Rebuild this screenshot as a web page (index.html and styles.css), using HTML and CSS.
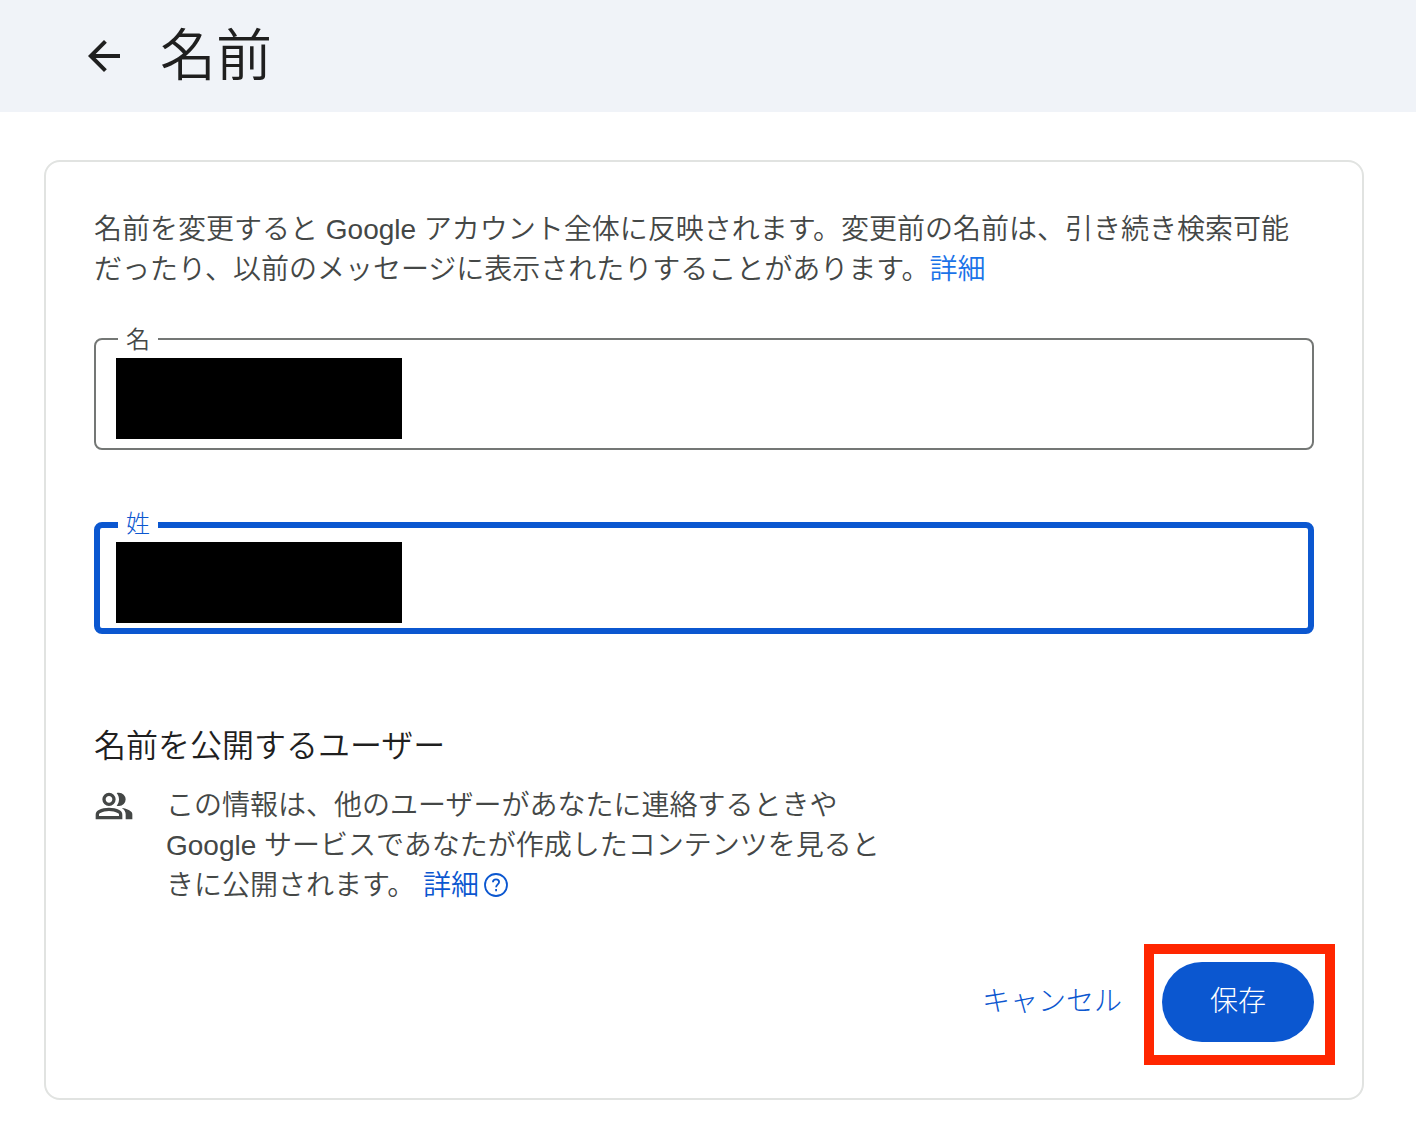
FILE: index.html
```html
<!DOCTYPE html>
<html lang="ja">
<head>
<meta charset="utf-8">
<meta name="viewport" content="width=device-width, initial-scale=1">
<title>名前</title>
<link rel="stylesheet" href="styles.css">
</head>
<body>
<header class="topbar">
  <button class="back" type="button" aria-label="戻る">
    <svg viewBox="0 0 24 24" aria-hidden="true"><path d="M20 11H7.83l5.59-5.59L12 4l-8 8 8 8 1.41-1.41L7.83 13H20v-2z"/></svg>
  </button>
  <h1 class="title">名前</h1>
</header>
<main class="page">
  <form class="card">
    <p class="text">名前を変更すると Google アカウント全体に反映されます。変更前の名前は、引き続き検索可能だったり、以前のメッセージに表示されたりすることがあります。<a class="link link-light" href="#">詳細</a></p>
    <div class="fields">
      <div class="field">
        <label class="label" for="given">名</label>
        <input class="input" id="given" type="text">
        <span class="mask"></span>
      </div>
      <div class="field field-active">
        <label class="label" for="family">姓</label>
        <input class="input" id="family" type="text">
        <span class="mask"></span>
      </div>
    </div>
    <section class="visibility">
      <h2 class="heading">名前を公開するユーザー</h2>
      <div class="info">
        <svg class="people" viewBox="0 0 24 24" aria-hidden="true"><path d="M1 20v-2.8q0-.85.438-1.563T2.6 14.55q1.55-.775 3.15-1.163T9 13t3.25.388 3.15 1.162q.725.375 1.163 1.088T17 17.2V20H1Zm18 0v-3q0-1.1-.613-2.113T16.65 13.15q1.275.15 2.4.513t2.1.887q.9.5 1.375 1.112T23 17v3h-4ZM9 12q-1.65 0-2.825-1.175T5 8t1.175-2.825T9 4t2.825 1.175T13 8t-1.175 2.825T9 12Zm10-4q0 1.65-1.175 2.825T15 12q-.275 0-.7-.063T13.6 11.8q.675-.8 1.037-1.775T15 8t-.363-2.025T13.6 4.2q.35-.125.7-.163T15 4q1.65 0 2.825 1.175T19 8ZM3 18h12v-.8q0-.275-.138-.5t-.362-.35q-1.35-.675-2.725-1.012T9 15t-2.775.338T3.5 16.35q-.225.125-.363.35T3 17.2v.8Zm6-8q.825 0 1.413-.588T11 8t-.588-1.413T9 6t-1.413.588T7 8t.588 1.413T9 10Z"/></svg>
        <p class="text info-text">この情報は、他のユーザーがあなたに連絡するときや Google サービスであなたが作成したコンテンツを見るときに公開されます。 <a class="link" href="#">詳細<svg class="help" viewBox="0 0 28 28" aria-hidden="true"><circle cx="14" cy="14" r="11"/><path d="M10.9 11.2c.1-1.8 1.4-2.9 3.1-2.9s3.1 1.1 3.1 2.7c0 2.2-3 2.5-3 5.2"/><path d="M14.1 18v2.2"/></svg></a></p>
      </div>
    </section>
    <div class="actions">
      <button class="btn btn-text" type="button">キャンセル</button>
      <div class="save">
        <button class="btn btn-filled" type="submit">保存</button>
        <span class="marker"></span>
      </div>
    </div>
  </form>
</main>
</body>
</html>
```
FILE: styles.css
```css
* {
  box-sizing: border-box;
}

body {
  margin: 0;
  background: #fff;
  color: #1f1f1f;
  font-family: "Liberation Sans", "Noto Sans CJK JP", sans-serif;
  font-size: 28px;
  font-weight: 350;
  line-height: 40px;
}

.topbar {
  display: flex;
  align-items: center;
  gap: 32px;
  height: 112px;
  padding: 0 80px;
  background: #f0f3f8;
}

.back {
  width: 48px;
  height: 48px;
  padding: 0;
  border: 0;
  background: none;
}

.back svg {
  display: block;
  fill: #1f1f1f;
}

.title {
  margin: 0;
  font-size: 56px;
  font-weight: 350;
  line-height: 72px;
}

.page {
  padding: 48px 52px 26px 44px;
}

.card {
  padding: 48px 48px 56px;
  border: 2px solid #e1e3e1;
  border-radius: 16px;
}

.text {
  margin: 0;
  color: #444746;
}

.link {
  color: #0b57d0;
  text-decoration: none;
}

.link-light {
  color: #1a73e8;
}

.fields {
  display: grid;
  gap: 72px;
  margin-top: 48px;
}

.field {
  position: relative;
  height: 112px;
}

.input {
  display: block;
  width: 100%;
  height: 100%;
  padding: 0 32px;
  border: 2px solid #747775;
  border-radius: 8px;
  outline: 0;
  background: none;
  font: inherit;
}

.field-active .input {
  border: 6px solid #0b57d0;
}

.label {
  position: absolute;
  top: -10px;
  left: 24px;
  padding: 0 8px;
  background: #fff;
  color: #444746;
  font-size: 24px;
  line-height: 24px;
}

.field-active .label {
  color: #0b57d0;
  font-weight: 300;
}

.mask {
  position: absolute;
  top: 20px;
  left: 22px;
  width: 286px;
  height: 81px;
  background: #000;
}

.visibility {
  margin-top: 92px;
}

.heading {
  margin: 0 0 20px;
  font-size: 32px;
  font-weight: 350;
  line-height: 40px;
}

.info {
  display: flex;
  gap: 32px;
}

.people {
  flex: none;
  width: 40px;
  height: 40px;
  fill: #444746;
}

.info-text {
  max-width: 720px;
}

.help {
  width: 28px;
  height: 28px;
  margin-left: 3px;
  vertical-align: -4px;
  fill: none;
  stroke: #0b57d0;
  stroke-width: 1.8;
}

.actions {
  display: flex;
  justify-content: flex-end;
  align-items: center;
  gap: 16px;
  margin-top: 56px;
}

.btn {
  height: 80px;
  border: 0;
  border-radius: 40px;
  font: inherit;
  font-weight: 300;
}

.btn-text {
  padding: 0 24px;
  background: none;
  color: #0b57d0;
}

.btn-filled {
  display: block;
  padding: 0 48px;
  background: #0b57d0;
  color: #fff;
}

.save {
  position: relative;
}

.marker {
  position: absolute;
  inset: -18px -21px -23px -18px;
  border: 10px solid #ff2600;
  pointer-events: none;
}
```
